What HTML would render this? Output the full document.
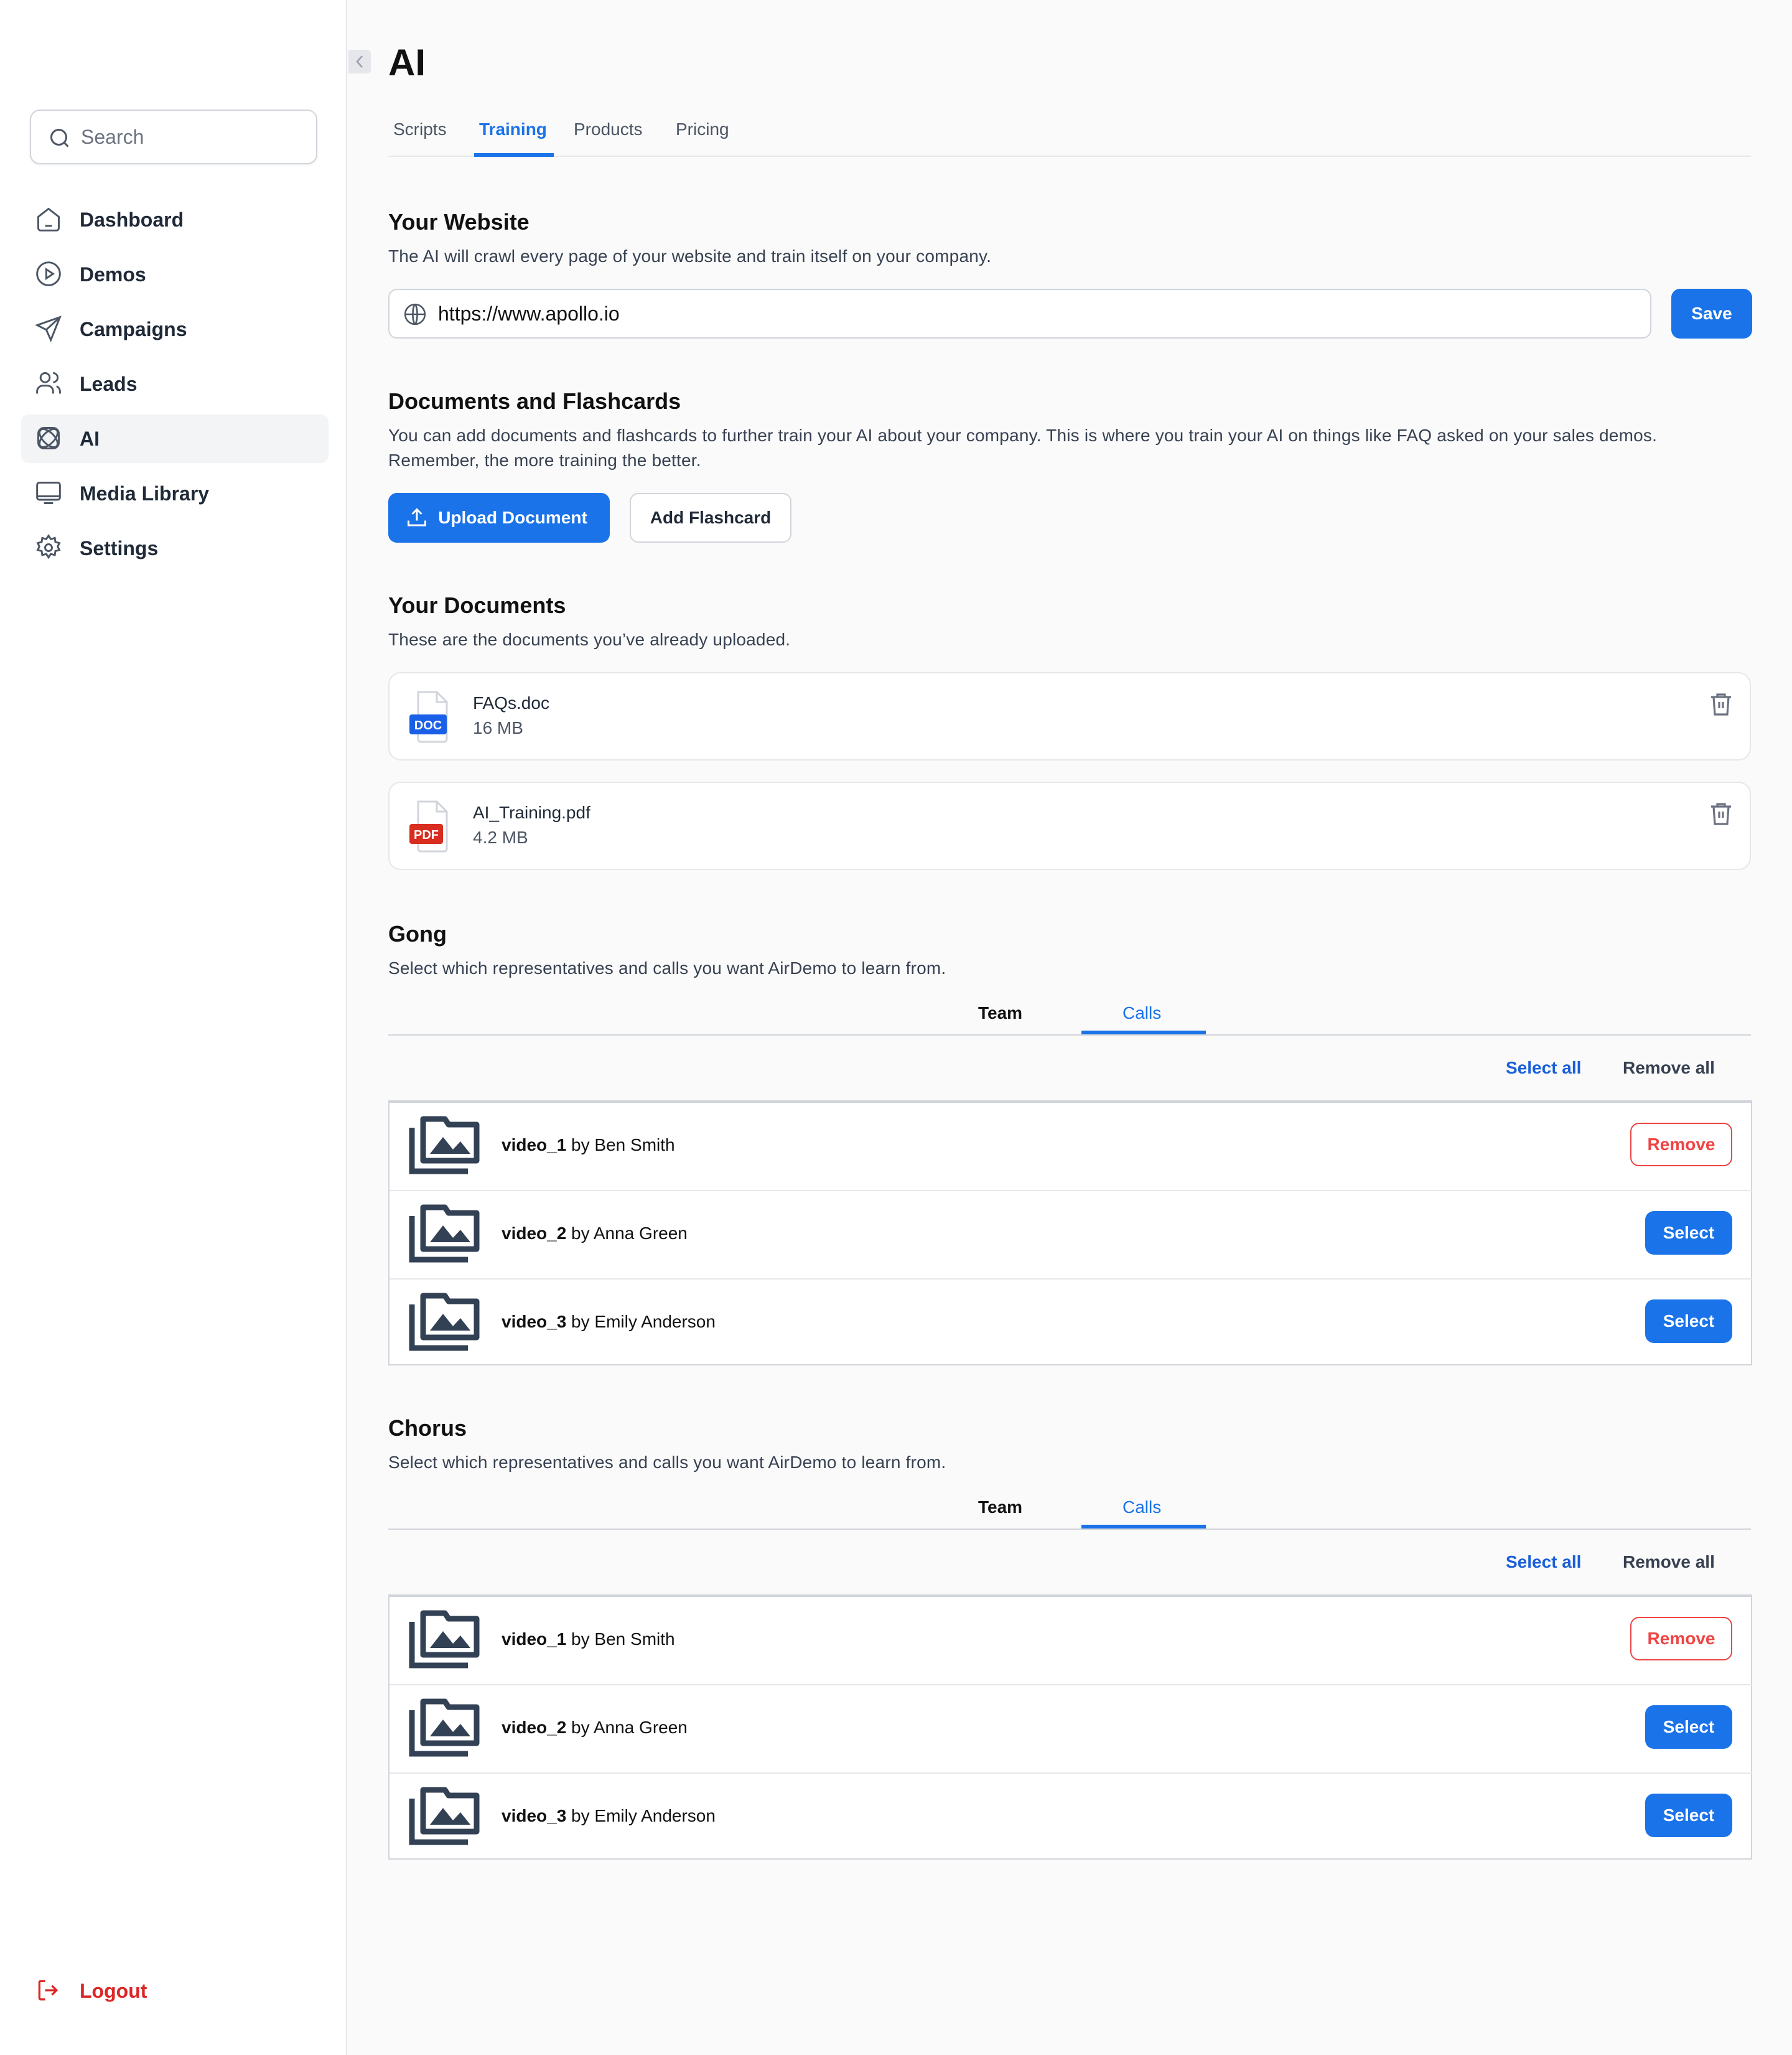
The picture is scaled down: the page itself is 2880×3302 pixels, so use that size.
<!DOCTYPE html>
<html><head><meta charset="utf-8"><style>
*{box-sizing:border-box;margin:0;padding:0}
html,body{width:2880px;height:3302px;overflow:hidden;background:#fafafa}
#w{zoom:2;width:1440px;height:1651px;position:relative;font-family:"Liberation Sans",sans-serif;color:#374151}
.a{position:absolute}
.side{left:0;top:0;width:279px;height:1651px;background:#fff;border-right:1px solid #e5e7eb}
.search{left:24px;top:88px;width:231px;height:44px;border:1px solid #d1d5db;border-radius:8px;background:#fff;box-shadow:0 1px 2px rgba(0,0,0,.05)}
.nav{left:17px;width:247px;height:39px;border-radius:6px;font-size:16px;font-weight:bold;color:#1f2937;line-height:39px;padding-left:47px}
.nav svg{position:absolute;left:11px;top:8px}
h2{position:absolute;font-size:18px;font-weight:bold;color:#111;left:312px}
.p{position:absolute;font-size:14px;color:#374151;left:312px;line-height:20px;letter-spacing:.1px}
.card{left:312px;width:1095px;height:71px;border:1px solid #e5e7eb;border-radius:10px;background:#fff}
.btnb{background:#1a73e8;color:#fff;border-radius:7px;font-size:14px;font-weight:bold;text-align:center}
.row{left:0;width:1095px;height:71px;border-bottom:1px solid #e5e7eb}
.row .t{position:absolute;left:90px;top:26px;font-size:14px;color:#111}
.rm{position:absolute;left:997px;top:16px;width:82px;height:35px;border:1px solid #ef4444;border-radius:7px;color:#ef4444;font-size:14px;font-weight:bold;text-align:center;line-height:33px;background:#fff}
.sl{position:absolute;left:1009px;top:16px;width:70px;height:35px;line-height:35px}
</style></head><body><div id="w">
<div class="a side"></div>
<div class="a search"><svg class="a" style="left:14px;top:13px" width="18" height="18" viewBox="0 0 24 24" fill="none" stroke="#4b5563" stroke-width="2"><circle cx="11" cy="11" r="8"/><path d="M21 21l-4.3-4.3"/></svg><span class="a" style="left:40px;top:12px;font-size:16px;color:#6b7280">Search</span></div>

<div class="a nav" style="top:157px">Dashboard<svg width="22" height="22" viewBox="0 0 24 24" fill="none" stroke="#4b5563" stroke-width="1.6"><path d="M3 10l9-7 9 7v10a2 2 0 0 1-2 2H5a2 2 0 0 1-2-2z"/><path d="M9 18h6"/></svg></div>
<div class="a nav" style="top:201px">Demos<svg width="22" height="22" viewBox="0 0 24 24" fill="none" stroke="#4b5563" stroke-width="1.6"><circle cx="12" cy="12" r="10"/><path d="M10 8l6 4-6 4z"/></svg></div>
<div class="a nav" style="top:245px">Campaigns<svg width="22" height="22" viewBox="0 0 24 24" fill="none" stroke="#4b5563" stroke-width="1.6"><path d="M22 2L2 9l8 4 4 9z"/><path d="M22 2L10 13"/></svg></div>
<div class="a nav" style="top:289px">Leads<svg width="22" height="22" viewBox="0 0 24 24" fill="none" stroke="#4b5563" stroke-width="1.6"><circle cx="9" cy="7" r="4"/><path d="M2 21v-2a5 5 0 0 1 5-5h4a5 5 0 0 1 5 5v2M16 3a4 4 0 0 1 0 8M22 21v-2a5 5 0 0 0-3-4.5"/></svg></div>
<div class="a nav" style="top:333px;background:#f3f4f6">AI<svg width="22" height="22" viewBox="0 0 24 24" fill="none" stroke="#4b5563" stroke-width="1.6"><ellipse cx="12" cy="12" rx="10" ry="5" transform="rotate(45 12 12)"/><ellipse cx="12" cy="12" rx="10" ry="5" transform="rotate(-45 12 12)"/><rect x="3" y="3" width="18" height="18" rx="5"/></svg></div>
<div class="a nav" style="top:377px">Media Library<svg width="22" height="22" viewBox="0 0 24 24" fill="none" stroke="#4b5563" stroke-width="1.6"><rect x="2" y="3" width="20" height="15" rx="2"/><path d="M2 15h20M8 21h8"/></svg></div>
<div class="a nav" style="top:421px">Settings<svg width="22" height="22" viewBox="0 0 24 24" fill="none" stroke="#4b5563" stroke-width="1.6"><circle cx="12" cy="12" r="3"/><path d="M12 1.5l2 3 3.5-1 .5 3.5 3.5 1-1.5 3 1.5 3-3.5 1-.5 3.5-3.5-1-2 3-2-3-3.5 1-.5-3.5-3.5-1 1.5-3-1.5-3 3.5-1 .5-3.5 3.5 1z"/></svg></div>
<div class="a nav" style="top:1580px;color:#dc2626">Logout<svg width="22" height="22" viewBox="0 0 24 24" fill="none" stroke="#dc2626" stroke-width="1.8"><path d="M9 4H5a1 1 0 0 0-1 1v14a1 1 0 0 0 1 1h4M15 8l4 4-4 4M19 12H9"/></svg></div>

<div class="a" style="left:280px;top:40px;width:18px;height:19px;background:#e5e7eb;border-radius:0 3px 3px 0"><svg width="18" height="19" viewBox="0 0 18 19" fill="none" stroke="#9ca3af" stroke-width="1.4"><path d="M11 5l-4 4.5 4 4.5"/></svg></div>
<div class="a" style="left:312px;top:33px;font-size:30px;font-weight:bold;color:#111">AI</div>
<div class="a" style="left:312px;top:125px;width:1095px;height:1px;background:#e5e7eb"></div>
<div class="a" style="left:316px;top:96px;font-size:14px;color:#4b5563">Scripts</div>
<div class="a" style="left:385px;top:96px;font-size:14px;color:#1a73e8;font-weight:bold">Training</div>
<div class="a" style="left:381px;top:123px;width:64px;height:3px;background:#1a73e8"></div>
<div class="a" style="left:461px;top:96px;font-size:14px;color:#4b5563">Products</div>
<div class="a" style="left:543px;top:96px;font-size:14px;color:#4b5563">Pricing</div>

<h2 style="top:168px">Your Website</h2>
<div class="p" style="top:196px">The AI will crawl every page of your website and train itself on your company.</div>
<div class="a" style="left:312px;top:232px;width:1015px;height:40px;border:1px solid #d1d5db;border-radius:7px;background:#fff"><svg class="a" style="left:11px;top:10px" width="19" height="19" viewBox="0 0 24 24" fill="none" stroke="#4b5563" stroke-width="1.6"><circle cx="12" cy="12" r="10"/><path d="M2 12h20M12 2c3 3 3 17 0 20M12 2c-3 3-3 17 0 20"/></svg><span class="a" style="left:39px;top:10px;font-size:16px;color:#111">https://www.apollo.io</span></div>
<div class="a btnb" style="left:1343px;top:232px;width:65px;height:40px;line-height:40px">Save</div>

<h2 style="top:312px">Documents and Flashcards</h2>
<div class="p" style="top:340px">You can add documents and flashcards to further train your AI about your company. This is where you train your AI on things like FAQ asked on your sales demos.<br>Remember, the more training the better.</div>
<div class="a btnb" style="left:312px;top:396px;width:178px;height:40px;line-height:40px;padding-left:22px">Upload Document<svg class="a" style="left:14px;top:11px" width="18" height="18" viewBox="0 0 24 24" fill="none" stroke="#fff" stroke-width="2"><path d="M12 15V3M7 8l5-5 5 5M3 15v5h18v-5"/></svg></div>
<div class="a" style="left:506px;top:396px;width:130px;height:40px;line-height:38px;border:1px solid #d1d5db;border-radius:7px;background:#fff;font-size:14px;font-weight:bold;color:#1f2937;text-align:center">Add Flashcard</div>

<h2 style="top:476px">Your Documents</h2>
<div class="p" style="top:504px">These are the documents you’ve already uploaded.</div>
<div class="a card" style="top:540px">
<svg class="a" style="left:16px;top:14px" width="40" height="42" viewBox="0 0 40 42" fill="none"><path d="M7 1h15l8 8v30a2 2 0 0 1-2 2H9a2 2 0 0 1-2-2z" stroke="#d1d5db" stroke-width="1.5" fill="#fff"/><path d="M22 1v8h8" stroke="#d1d5db" stroke-width="1.5"/><rect x="0" y="19" width="30" height="16" rx="2" fill="#1a5fe8"/><text x="15" y="31" font-size="10" font-weight="bold" fill="#fff" text-anchor="middle" font-family="Liberation Sans">DOC</text></svg>
<div class="a" style="left:67px;top:16px;font-size:14px;color:#1f2937">FAQs.doc</div><div class="a" style="left:67px;top:36px;font-size:14px;color:#4b5563">16 MB</div>
<svg class="a" style="left:1061px;top:15px" width="18" height="20" viewBox="0 0 18 20" fill="none" stroke="#6b7280" stroke-width="1.6"><path d="M1 4h16M6 4V2h6v2M3 4l1 14h10l1-14M7.5 8v5M10.5 8v5"/></svg></div>
<div class="a card" style="top:628px">
<svg class="a" style="left:16px;top:14px" width="40" height="42" viewBox="0 0 40 42" fill="none"><path d="M7 1h15l8 8v30a2 2 0 0 1-2 2H9a2 2 0 0 1-2-2z" stroke="#d1d5db" stroke-width="1.5" fill="#fff"/><path d="M22 1v8h8" stroke="#d1d5db" stroke-width="1.5"/><rect x="0" y="19" width="27" height="16" rx="2" fill="#d92d20"/><text x="13.5" y="31" font-size="10" font-weight="bold" fill="#fff" text-anchor="middle" font-family="Liberation Sans">PDF</text></svg>
<div class="a" style="left:67px;top:16px;font-size:14px;color:#1f2937">AI_Training.pdf</div><div class="a" style="left:67px;top:36px;font-size:14px;color:#4b5563">4.2 MB</div>
<svg class="a" style="left:1061px;top:15px" width="18" height="20" viewBox="0 0 18 20" fill="none" stroke="#6b7280" stroke-width="1.6"><path d="M1 4h16M6 4V2h6v2M3 4l1 14h10l1-14M7.5 8v5M10.5 8v5"/></svg></div>

<div class="a" style="left:0;top:740px;width:1440px;height:370px">
<h2 style="top:0">Gong</h2>
<div class="p" style="top:28px">Select which representatives and calls you want AirDemo to learn from.</div>
<div class="a" style="left:786px;top:66px;font-size:14px;font-weight:bold;color:#111">Team</div>
<div class="a" style="left:902px;top:66px;font-size:14px;color:#1a73e8">Calls</div>
<div class="a" style="left:312px;top:91px;width:1095px;height:1px;background:#d1d5db"></div>
<div class="a" style="left:869px;top:88px;width:100px;height:3px;background:#1a73e8"></div>
<div class="a" style="left:1210px;top:110px;font-size:14px;color:#1a5fd8;font-weight:bold">Select all</div>
<div class="a" style="left:1304px;top:110px;font-size:14px;color:#374151;font-weight:bold">Remove all</div>
<div class="a" style="left:312px;top:144px;width:1096px;height:213px;border:1px solid #d1d5db;border-top:2px solid #d1d5db;background:#fff">
<div class="a row" style="top:0"><svg class="a" style="left:8px;top:0" width="80" height="65" viewBox="0 0 160 130"><path d="M20 40v70h90" fill="none" stroke="#334155" stroke-width="9"/><path d="M38 26h35l6 9h45v58H38z" fill="none" stroke="#334155" stroke-width="9" stroke-linejoin="round"/><path d="M49 82L70 55l16 20 12-13 16 20z" fill="#334155"/></svg><span class="t"><b>video_1</b> by Ben Smith</span><div class="rm">Remove</div></div>
<div class="a row" style="top:71px"><svg class="a" style="left:8px;top:0" width="80" height="65" viewBox="0 0 160 130"><path d="M20 40v70h90" fill="none" stroke="#334155" stroke-width="9"/><path d="M38 26h35l6 9h45v58H38z" fill="none" stroke="#334155" stroke-width="9" stroke-linejoin="round"/><path d="M49 82L70 55l16 20 12-13 16 20z" fill="#334155"/></svg><span class="t"><b>video_2</b> by Anna Green</span><div class="btnb sl">Select</div></div>
<div class="a row" style="top:142px;border-bottom:0"><svg class="a" style="left:8px;top:0" width="80" height="65" viewBox="0 0 160 130"><path d="M20 40v70h90" fill="none" stroke="#334155" stroke-width="9"/><path d="M38 26h35l6 9h45v58H38z" fill="none" stroke="#334155" stroke-width="9" stroke-linejoin="round"/><path d="M49 82L70 55l16 20 12-13 16 20z" fill="#334155"/></svg><span class="t"><b>video_3</b> by Emily Anderson</span><div class="btnb sl">Select</div></div>
</div></div>

<div class="a" style="left:0;top:1137px;width:1440px;height:370px">
<h2 style="top:0">Chorus</h2>
<div class="p" style="top:28px">Select which representatives and calls you want AirDemo to learn from.</div>
<div class="a" style="left:786px;top:66px;font-size:14px;font-weight:bold;color:#111">Team</div>
<div class="a" style="left:902px;top:66px;font-size:14px;color:#1a73e8">Calls</div>
<div class="a" style="left:312px;top:91px;width:1095px;height:1px;background:#d1d5db"></div>
<div class="a" style="left:869px;top:88px;width:100px;height:3px;background:#1a73e8"></div>
<div class="a" style="left:1210px;top:110px;font-size:14px;color:#1a5fd8;font-weight:bold">Select all</div>
<div class="a" style="left:1304px;top:110px;font-size:14px;color:#374151;font-weight:bold">Remove all</div>
<div class="a" style="left:312px;top:144px;width:1096px;height:213px;border:1px solid #d1d5db;border-top:2px solid #d1d5db;background:#fff">
<div class="a row" style="top:0"><svg class="a" style="left:8px;top:0" width="80" height="65" viewBox="0 0 160 130"><path d="M20 40v70h90" fill="none" stroke="#334155" stroke-width="9"/><path d="M38 26h35l6 9h45v58H38z" fill="none" stroke="#334155" stroke-width="9" stroke-linejoin="round"/><path d="M49 82L70 55l16 20 12-13 16 20z" fill="#334155"/></svg><span class="t"><b>video_1</b> by Ben Smith</span><div class="rm">Remove</div></div>
<div class="a row" style="top:71px"><svg class="a" style="left:8px;top:0" width="80" height="65" viewBox="0 0 160 130"><path d="M20 40v70h90" fill="none" stroke="#334155" stroke-width="9"/><path d="M38 26h35l6 9h45v58H38z" fill="none" stroke="#334155" stroke-width="9" stroke-linejoin="round"/><path d="M49 82L70 55l16 20 12-13 16 20z" fill="#334155"/></svg><span class="t"><b>video_2</b> by Anna Green</span><div class="btnb sl">Select</div></div>
<div class="a row" style="top:142px;border-bottom:0"><svg class="a" style="left:8px;top:0" width="80" height="65" viewBox="0 0 160 130"><path d="M20 40v70h90" fill="none" stroke="#334155" stroke-width="9"/><path d="M38 26h35l6 9h45v58H38z" fill="none" stroke="#334155" stroke-width="9" stroke-linejoin="round"/><path d="M49 82L70 55l16 20 12-13 16 20z" fill="#334155"/></svg><span class="t"><b>video_3</b> by Emily Anderson</span><div class="btnb sl">Select</div></div>
</div></div>
</div></body></html>
